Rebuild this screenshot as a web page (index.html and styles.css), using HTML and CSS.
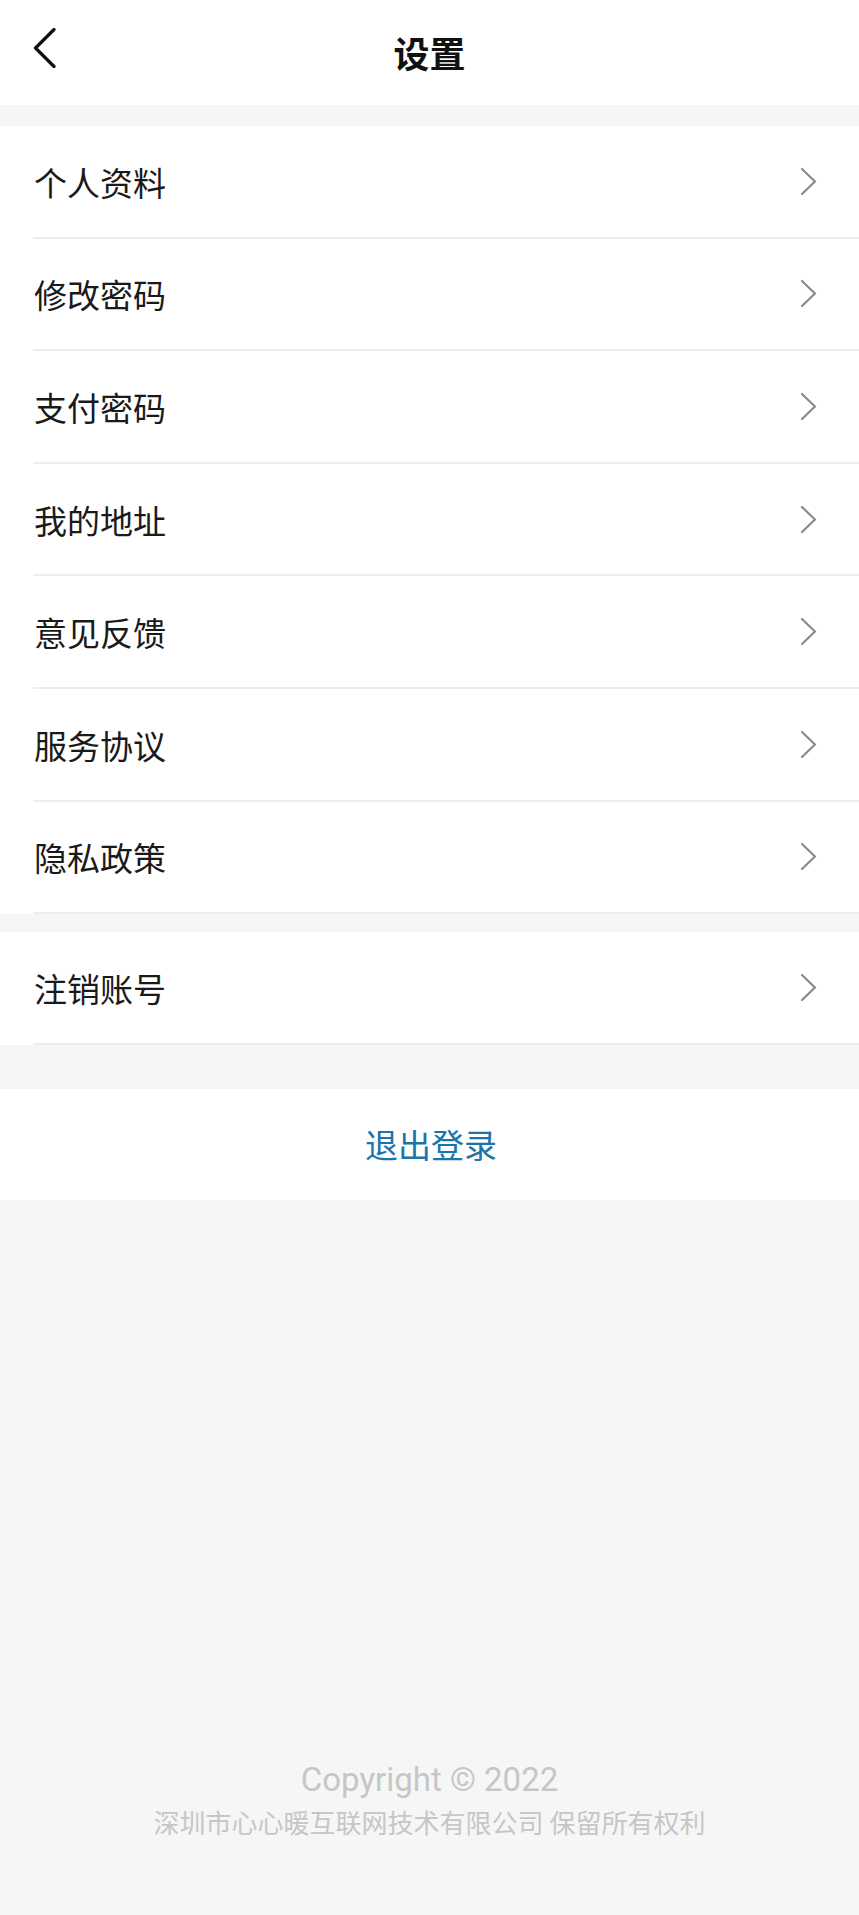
FILE: index.html
```html
<!DOCTYPE html>
<html lang="zh-CN">
<head>
<meta charset="utf-8">
<title>设置</title>
<link rel="stylesheet" href="styles.css">
</head>
<body>
<div class="page">
  <header class="topbar">
    <span class="back">
      <svg width="24" height="40" viewBox="0 0 24 40"><path d="M21 1.5 L2.5 20 L21 38.5" fill="none" stroke="#111" stroke-width="3.2" stroke-linecap="round" stroke-linejoin="round"/></svg>
    </span>
    <h1 class="title">设置</h1>
  </header>

  <ul class="group group-main">
    <li class="row"><span class="label">个人资料</span><span class="chev"><svg width="17" height="29" viewBox="0 0 17 29"><path d="M2 2 L15 14.5 L2 27" fill="none" stroke="#8a8a8a" stroke-width="2.2" stroke-linecap="round" stroke-linejoin="round"/></svg></span></li>
    <li class="row"><span class="label">修改密码</span><span class="chev"><svg width="17" height="29" viewBox="0 0 17 29"><path d="M2 2 L15 14.5 L2 27" fill="none" stroke="#8a8a8a" stroke-width="2.2" stroke-linecap="round" stroke-linejoin="round"/></svg></span></li>
    <li class="row"><span class="label">支付密码</span><span class="chev"><svg width="17" height="29" viewBox="0 0 17 29"><path d="M2 2 L15 14.5 L2 27" fill="none" stroke="#8a8a8a" stroke-width="2.2" stroke-linecap="round" stroke-linejoin="round"/></svg></span></li>
    <li class="row"><span class="label">我的地址</span><span class="chev"><svg width="17" height="29" viewBox="0 0 17 29"><path d="M2 2 L15 14.5 L2 27" fill="none" stroke="#8a8a8a" stroke-width="2.2" stroke-linecap="round" stroke-linejoin="round"/></svg></span></li>
    <li class="row"><span class="label">意见反馈</span><span class="chev"><svg width="17" height="29" viewBox="0 0 17 29"><path d="M2 2 L15 14.5 L2 27" fill="none" stroke="#8a8a8a" stroke-width="2.2" stroke-linecap="round" stroke-linejoin="round"/></svg></span></li>
    <li class="row"><span class="label">服务协议</span><span class="chev"><svg width="17" height="29" viewBox="0 0 17 29"><path d="M2 2 L15 14.5 L2 27" fill="none" stroke="#8a8a8a" stroke-width="2.2" stroke-linecap="round" stroke-linejoin="round"/></svg></span></li>
    <li class="row"><span class="label">隐私政策</span><span class="chev"><svg width="17" height="29" viewBox="0 0 17 29"><path d="M2 2 L15 14.5 L2 27" fill="none" stroke="#8a8a8a" stroke-width="2.2" stroke-linecap="round" stroke-linejoin="round"/></svg></span></li>
  </ul>

  <ul class="group group-account">
    <li class="row"><span class="label">注销账号</span><span class="chev"><svg width="17" height="29" viewBox="0 0 17 29"><path d="M2 2 L15 14.5 L2 27" fill="none" stroke="#8a8a8a" stroke-width="2.2" stroke-linecap="round" stroke-linejoin="round"/></svg></span></li>
  </ul>

  <div class="logout">退出登录</div>

  <footer class="footer">
    <p class="copy">Copyright © 2022</p>
    <p class="company">深圳市心心暖互联网技术有限公司 保留所有权利</p>
  </footer>
</div>
</body>
</html>
```

FILE: styles.css
```css
html, body {
  margin: 0;
  padding: 0;
  background: #f6f6f6;
}

body {
  font-family: "Noto Sans CJK SC", "Noto Sans", sans-serif;
  color: #1a1a1a;
}

.page {
  width: 859px;
  min-height: 1915px;
  display: flex;
  flex-direction: column;
}

.topbar {
  height: 105px;
  background: #ffffff;
  display: flex;
  align-items: center;
  justify-content: center;
  position: relative;
}

.back {
  position: absolute;
  left: 33px;
  top: 28px;
  width: 24px;
  height: 40px;
  display: block;
}

.back svg {
  display: block;
}

.title {
  margin: 0;
  font-size: 36px;
  font-weight: 700;
  color: #111;
  line-height: 1;
  padding-bottom: 2px;
}

.group {
  list-style: none;
  margin: 0;
  padding: 0;
  background: #ffffff;
}

.group-main {
  margin-top: 21px;
}

.group-account {
  margin-top: 18px;
}

.row {
  height: 112.6px;
  box-sizing: border-box;
  margin-left: 33px;
  padding-left: 1px;
  padding-right: 42px;
  border-bottom: 2px solid #ededed;
  display: flex;
  align-items: center;
  justify-content: space-between;
}

.label {
  font-size: 33px;
  line-height: 1;
  color: #1a1a1a;
  padding-top: 2px;
}

.chev {
  display: block;
  width: 17px;
  height: 29px;
}

.chev svg {
  display: block;
}

.logout {
  margin-top: 44px;
  height: 111px;
  background: #ffffff;
  display: flex;
  align-items: center;
  justify-content: center;
  font-size: 33px;
  color: #1b74aa;
  padding-left: 3px;
}

.footer {
  margin-top: auto;
  padding-bottom: 73px;
  text-align: center;
}

.footer p {
  margin: 0;
}

.copy {
  font-family: Roboto, "Noto Sans", sans-serif;
  font-size: 33px;
  line-height: 44px;
  color: #c6c6c6;
}

.company {
  font-size: 26px;
  line-height: 40px;
  color: #c6c6c6;
}
```
